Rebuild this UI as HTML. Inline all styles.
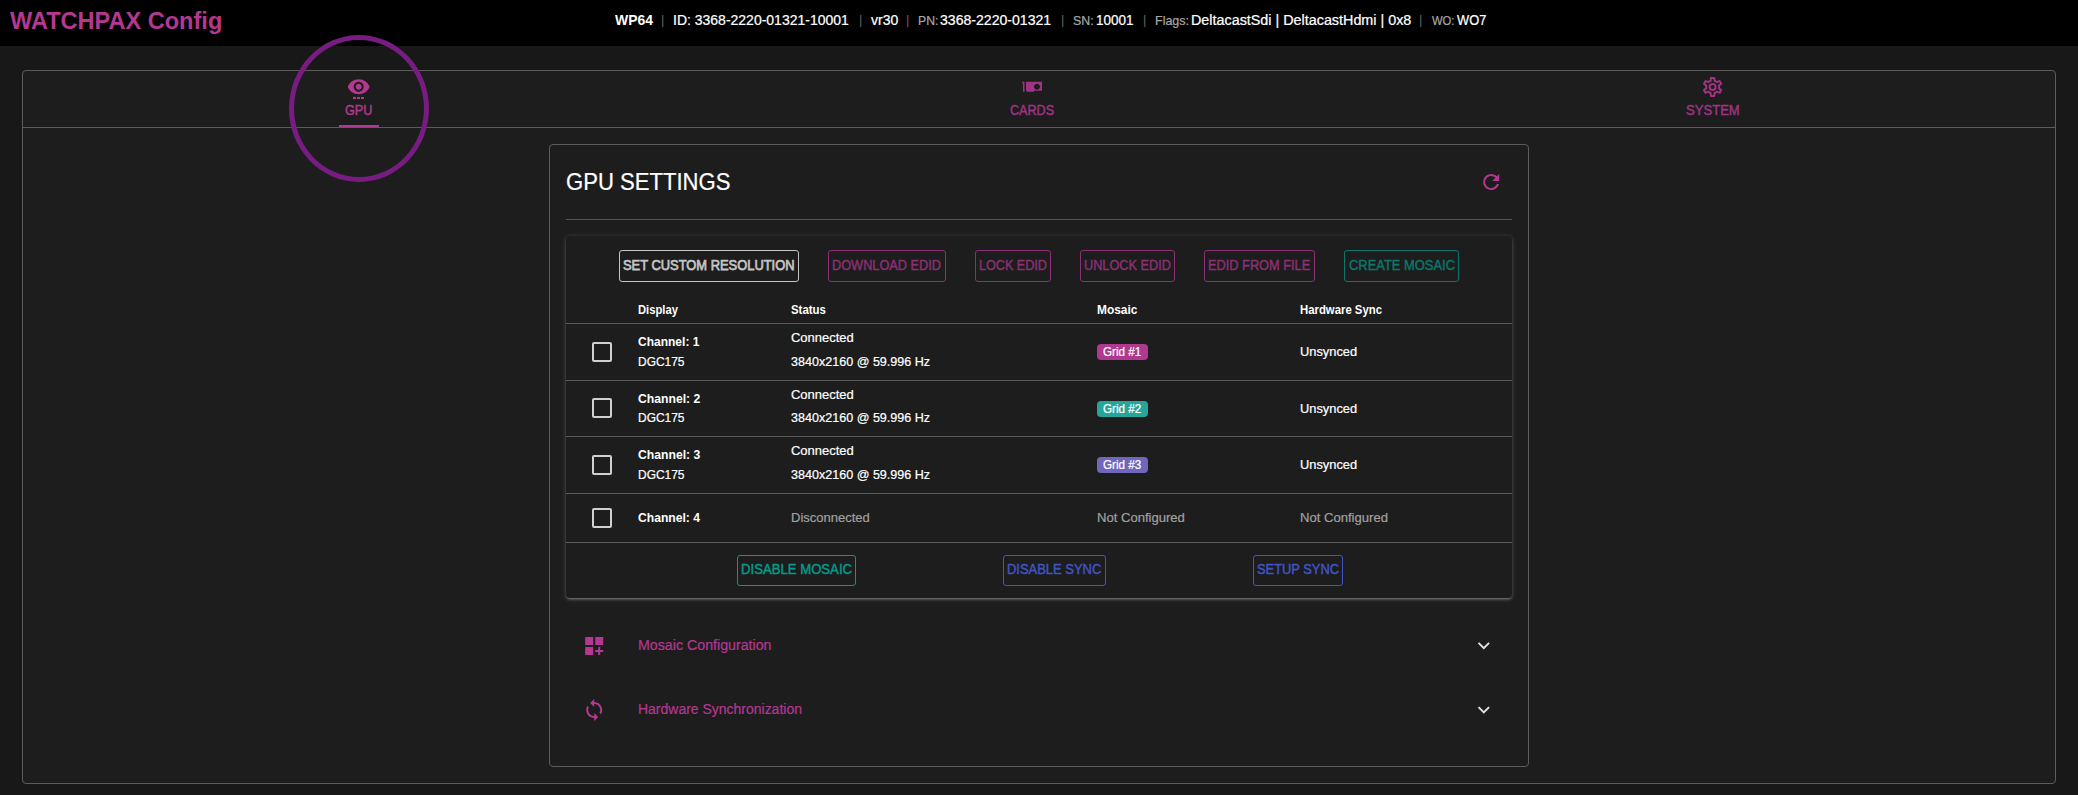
<!DOCTYPE html>
<html lang="en">
<head>
<meta charset="utf-8">
<title>WATCHPAX Config</title>
<style>
*{box-sizing:border-box;margin:0;padding:0}
html,body{width:2078px;height:795px;overflow:hidden;background:#181818}
body{position:relative;font-family:"Liberation Sans",sans-serif;color:#fff;font-size:13px}
.x{position:absolute;white-space:nowrap;transform-origin:0 50%}
.a{position:absolute}
#hdr{left:0;top:0;width:2078px;height:46px;background:#000}
#main{left:22px;top:70px;width:2034px;height:714px;border:1px solid #5c5c5c;border-radius:4px;background:#1d1d1d}
#tabline{left:23px;top:127px;width:2032px;height:1px;background:#5c5c5c}
#ind{left:339px;top:125px;width:40px;height:2px;background:#b43891}
#card{left:549px;top:144px;width:980px;height:623px;border:1px solid #5c5c5c;border-radius:4px;background:#1d1d1d}
#hr1{left:566px;top:219px;width:946px;height:1px;background:#555}
#inner{left:566px;top:236px;width:946px;height:362px;border-radius:4px;background:#1d1d1d;box-shadow:0 1px 5px rgba(255,255,255,.2),0 2px 2px rgba(255,255,255,.14),0 3px 1px -2px rgba(255,255,255,.12)}
.btn{position:absolute;top:250px;height:32px;border:1px solid;border-radius:3px}
.b2{top:555px;height:31px}
.ln{position:absolute;left:566px;width:946px;height:1px;background:#5a5a5a}
.cb{position:absolute;left:592px;width:20px;height:20px;border:2px solid #d0d0d0;border-radius:2px}
.badge{position:absolute;left:1097px;width:51px;height:16px;border-radius:4px}
#ring{left:289px;top:35px;width:140px;height:147px;border:5px solid #771c80;border-radius:50%}
#ico{left:0;top:0;width:2078px;height:795px}
</style>
</head>
<body>
<div id="hdr" class="a"></div>
<div id="main" class="a"></div>
<div id="tabline" class="a"></div>
<div id="ind" class="a"></div>
<div id="card" class="a"></div>
<div id="hr1" class="a"></div>
<div id="inner" class="a"></div>

<div class="btn" style="left:619px;width:180px;border-color:#c4c4c4"></div>
<div class="btn" style="left:828px;width:118px;border-color:#8b3074"></div>
<div class="btn" style="left:975px;width:76px;border-color:#8b3074"></div>
<div class="btn" style="left:1080px;width:95px;border-color:#8b3074"></div>
<div class="btn" style="left:1204px;width:111px;border-color:#8b3074"></div>
<div class="btn" style="left:1344px;width:115px;border-color:#0c766b"></div>

<div class="ln" style="top:323px"></div>
<div class="ln" style="top:380px"></div>
<div class="ln" style="top:436px"></div>
<div class="ln" style="top:493px"></div>
<div class="ln" style="top:542px"></div>

<div class="cb" style="top:342px"></div>
<div class="cb" style="top:398px"></div>
<div class="cb" style="top:455px"></div>
<div class="cb" style="top:508px"></div>

<div class="badge" style="top:344px;background:#b0388f"></div>
<div class="badge" style="top:401px;background:#26a69a"></div>
<div class="badge" style="top:457px;background:#6f67bb"></div>

<div class="btn b2" style="left:737px;width:119px;border-color:#069a8b"></div>
<div class="btn b2" style="left:1003px;width:103px;border-color:#4055c5"></div>
<div class="btn b2" style="left:1253px;width:90px;border-color:#4055c5"></div>

<svg id="ico" class="a" viewBox="0 0 2078 795">
<g transform="translate(346.7,74.85)" fill="#b43891">
<path d="M12 4.5C7 4.5 2.73 7.61 1 12c1.730 4.390 6 7.500 11 7.500s9.270-3.110 11-7.500C21.270 7.610 17 4.500 12 4.500zM12 17c-2.760 0-5-2.240-5-5s2.240-5 5-5 5 2.240 5 5-2.240 5-5 5zm0-8c-1.660 0-3 1.340-3 3s1.340 3 3 3 3-1.340 3-3-1.340-3-3-3z"/>
<rect x="6.3" y="22.1" width="3" height="2.1"/><rect x="10.3" y="22.1" width="3" height="2.1"/><rect x="14.3" y="22.1" width="3" height="2.1"/>
</g>
<g transform="translate(1020,74.7)" fill="#9f3481">
<path d="M2 7H4.500V17H3V8.500H2M22 7V16H14V17H7V16H6V7H22M17 9C15.340 9 14 10.340 14 12S15.340 15 17 15 20 13.660 20 12 18.660 9 17 9Z"/>
</g>
<g transform="translate(1700.6,74.9)" fill="#9f3481">
<path d="M12,8A4,4 0 0,1 16,12A4,4 0 0,1 12,16A4,4 0 0,1 8,12A4,4 0 0,1 12,8M12,10A2,2 0 0,0 10,12A2,2 0 0,0 12,14A2,2 0 0,0 14,12A2,2 0 0,0 12,10M10,22C9.750,22 9.540,21.820 9.500,21.580L9.130,18.930C8.500,18.680 7.960,18.340 7.440,17.940L4.950,18.950C4.730,19.030 4.460,18.950 4.340,18.730L2.340,15.270C2.210,15.050 2.270,14.780 2.460,14.630L4.570,12.970L4.500,12L4.570,11L2.460,9.370C2.270,9.220 2.210,8.950 2.340,8.730L4.340,5.270C4.460,5.050 4.730,4.960 4.950,5.050L7.440,6.050C7.960,5.660 8.500,5.320 9.130,5.070L9.500,2.420C9.540,2.180 9.750,2 10,2H14C14.250,2 14.460,2.180 14.500,2.420L14.870,5.070C15.500,5.320 16.040,5.660 16.560,6.050L19.050,5.050C19.270,4.960 19.540,5.050 19.660,5.270L21.660,8.730C21.790,8.950 21.730,9.220 21.540,9.370L19.430,11L19.500,12L19.430,13L21.540,14.630C21.730,14.780 21.790,15.050 21.660,15.270L19.660,18.730C19.540,18.950 19.270,19.040 19.050,18.950L16.560,17.950C16.040,18.340 15.500,18.680 14.870,18.930L14.500,21.580C14.460,21.820 14.250,22 14,22H10M11.250,4L10.880,6.610C9.680,6.860 8.620,7.500 7.850,8.390L5.440,7.350L4.690,8.650L6.800,10.200C6.400,11.370 6.400,12.640 6.800,13.800L4.680,15.360L5.430,16.660L7.860,15.620C8.630,16.500 9.680,17.140 10.870,17.380L11.240,20H12.760L13.130,17.390C14.320,17.140 15.370,16.500 16.140,15.620L18.570,16.660L19.320,15.360L17.200,13.810C17.600,12.640 17.600,11.370 17.200,10.200L19.310,8.650L18.560,7.350L16.150,8.390C15.380,7.500 14.320,6.860 13.120,6.620L12.750,4H11.250Z"/>
</g>
<g transform="translate(1479.2,169.9)" fill="#b43891">
<path d="M17.650 6.350C16.200 4.900 14.210 4 12 4c-4.420 0-7.990 3.580-7.990 8s3.570 8 7.990 8c3.730 0 6.840-2.550 7.730-6h-2.080c-.82 2.330-3.040 4-5.650 4-3.310 0-6-2.690-6-6s2.690-6 6-6c1.660 0 3.140.69 4.220 1.780L13 11h7V4l-2.350 2.350z"/>
</g>
<g transform="translate(582.2,634)" fill="#b43891">
<path d="M3 3h8v8H3zm10 0h8v8h-8zM3 13h8v8H3zm15 0h-2v3h-3v2h3v3h2v-3h3v-2h-3z"/>
</g>
<g transform="translate(582.2,698)" fill="#b43891">
<path d="M12 4V1L8 5l4 4V6c3.310 0 6 2.690 6 6 0 1.010-.25 1.970-.7 2.800l1.460 1.460C19.540 15.030 20 13.570 20 12c0-4.420-3.580-8-8-8zm0 14c-3.310 0-6-2.690-6-6 0-1.010.25-1.970.7-2.800L5.240 7.740C4.460 8.970 4 10.430 4 12c0 4.420 3.580 8 8 8v3l4-4-4-4v3z"/>
</g>
<g transform="translate(1471.8,633.6)" fill="#e0e0e0">
<path d="M7.410 8.590L12 13.170l4.590-4.580L18 10l-6 6-6-6 1.410-1.410z"/>
</g>
<g transform="translate(1471.8,697.8)" fill="#e0e0e0">
<path d="M7.410 8.590L12 13.170l4.590-4.580L18 10l-6 6-6-6 1.410-1.410z"/>
</g>
</svg>

<div class="x" style="left:10px;top:6px;font-size:23.30px;line-height:30px;font-weight:700;color:#b43891;transform:scaleX(1.0104);">WATCHPAX Config</div>
<div class="x" style="left:615px;top:10px;font-size:14.46px;line-height:20px;font-weight:700;color:#fff;transform:scaleX(0.9646);">WP64</div>
<div class="x" style="left:661px;top:10px;font-size:12.90px;line-height:19px;font-weight:400;color:#626262;transform:scaleX(1.0000);">|</div>
<div class="x" style="left:859px;top:10px;font-size:12.90px;line-height:19px;font-weight:400;color:#626262;transform:scaleX(1.0000);">|</div>
<div class="x" style="left:906px;top:10px;font-size:12.90px;line-height:19px;font-weight:400;color:#626262;transform:scaleX(1.0000);">|</div>
<div class="x" style="left:1061px;top:10px;font-size:12.90px;line-height:19px;font-weight:400;color:#626262;transform:scaleX(1.0000);">|</div>
<div class="x" style="left:1143px;top:10px;font-size:12.90px;line-height:19px;font-weight:400;color:#626262;transform:scaleX(1.0000);">|</div>
<div class="x" style="left:1419px;top:10px;font-size:12.90px;line-height:19px;font-weight:400;color:#626262;transform:scaleX(1.0000);">|</div>
<div class="x" style="left:673px;top:10px;font-size:14.46px;line-height:20px;font-weight:400;color:#fff;transform:scaleX(0.9681);-webkit-text-stroke:0.22px #fff;">ID: 3368-2220-01321-10001</div>
<div class="x" style="left:871px;top:10px;font-size:14.46px;line-height:20px;font-weight:400;color:#fff;transform:scaleX(0.9676);-webkit-text-stroke:0.22px #fff;">vr30</div>
<div class="x" style="left:918px;top:11px;font-size:13.43px;line-height:19px;font-weight:400;color:#a8a8a8;transform:scaleX(0.9099);-webkit-text-stroke:0.22px #a8a8a8;">PN:</div>
<div class="x" style="left:940px;top:10px;font-size:14.46px;line-height:20px;font-weight:400;color:#fff;transform:scaleX(0.9738);-webkit-text-stroke:0.22px #fff;">3368-2220-01321</div>
<div class="x" style="left:1073px;top:11px;font-size:13.43px;line-height:19px;font-weight:400;color:#a8a8a8;transform:scaleX(0.9210);-webkit-text-stroke:0.22px #a8a8a8;">SN:</div>
<div class="x" style="left:1096px;top:10px;font-size:14.46px;line-height:20px;font-weight:400;color:#fff;transform:scaleX(0.9344);-webkit-text-stroke:0.22px #fff;">10001</div>
<div class="x" style="left:1155px;top:11px;font-size:13.43px;line-height:19px;font-weight:400;color:#a8a8a8;transform:scaleX(0.9309);-webkit-text-stroke:0.22px #a8a8a8;">Flags:</div>
<div class="x" style="left:1191px;top:10px;font-size:14.46px;line-height:20px;font-weight:400;color:#fff;transform:scaleX(0.9925);-webkit-text-stroke:0.22px #fff;">DeltacastSdi | DeltacastHdmi | 0x8</div>
<div class="x" style="left:1432px;top:11px;font-size:13.43px;line-height:19px;font-weight:400;color:#a8a8a8;transform:scaleX(0.8382);-webkit-text-stroke:0.22px #a8a8a8;">WO:</div>
<div class="x" style="left:1457px;top:10px;font-size:14.46px;line-height:20px;font-weight:400;color:#fff;transform:scaleX(0.8908);-webkit-text-stroke:0.22px #fff;">WO7</div>
<div class="x" style="left:345px;top:100px;font-size:14.46px;line-height:20px;font-weight:400;color:#b43891;transform:scaleX(0.8712);-webkit-text-stroke:0.45px #b43891;">GPU</div>
<div class="x" style="left:1010px;top:100px;font-size:14.46px;line-height:20px;font-weight:400;color:#9f3481;transform:scaleX(0.8706);-webkit-text-stroke:0.45px #9f3481;">CARDS</div>
<div class="x" style="left:1686px;top:100px;font-size:14.46px;line-height:20px;font-weight:400;color:#9f3481;transform:scaleX(0.9043);-webkit-text-stroke:0.45px #9f3481;">SYSTEM</div>
<div class="x" style="left:566px;top:166px;font-size:24.79px;line-height:31px;font-weight:400;color:#fff;transform:scaleX(0.8913);-webkit-text-stroke:0.22px #fff;">GPU SETTINGS</div>
<div class="x" style="left:623px;top:255px;font-size:14.46px;line-height:20px;font-weight:400;color:#c4c4c4;transform:scaleX(0.8924);-webkit-text-stroke:0.75px #c4c4c4;">SET CUSTOM RESOLUTION</div>
<div class="x" style="left:832px;top:255px;font-size:14.46px;line-height:20px;font-weight:400;color:#8b3074;transform:scaleX(0.8815);-webkit-text-stroke:0.45px #8b3074;">DOWNLOAD EDID</div>
<div class="x" style="left:979px;top:255px;font-size:14.46px;line-height:20px;font-weight:400;color:#8b3074;transform:scaleX(0.8718);-webkit-text-stroke:0.45px #8b3074;">LOCK EDID</div>
<div class="x" style="left:1084px;top:255px;font-size:14.46px;line-height:20px;font-weight:400;color:#8b3074;transform:scaleX(0.8791);-webkit-text-stroke:0.45px #8b3074;">UNLOCK EDID</div>
<div class="x" style="left:1208px;top:255px;font-size:14.46px;line-height:20px;font-weight:400;color:#8b3074;transform:scaleX(0.8843);-webkit-text-stroke:0.45px #8b3074;">EDID FROM FILE</div>
<div class="x" style="left:1349px;top:255px;font-size:14.46px;line-height:20px;font-weight:400;color:#0c766b;transform:scaleX(0.8942);-webkit-text-stroke:0.45px #0c766b;">CREATE MOSAIC</div>
<div class="x" style="left:638px;top:301px;font-size:12.40px;line-height:18px;font-weight:700;color:#fff;transform:scaleX(0.9067);">Display</div>
<div class="x" style="left:791px;top:301px;font-size:12.40px;line-height:18px;font-weight:700;color:#fff;transform:scaleX(0.9226);">Status</div>
<div class="x" style="left:1097px;top:301px;font-size:12.40px;line-height:18px;font-weight:700;color:#fff;transform:scaleX(0.9623);">Mosaic</div>
<div class="x" style="left:1300px;top:301px;font-size:12.40px;line-height:18px;font-weight:700;color:#fff;transform:scaleX(0.9152);">Hardware Sync</div>
<div class="x" style="left:638px;top:332px;font-size:13.43px;line-height:19px;font-weight:700;color:#fff;transform:scaleX(0.8948);">Channel: 1</div>
<div class="x" style="left:638px;top:352px;font-size:13.43px;line-height:19px;font-weight:400;color:#fff;transform:scaleX(0.8900);-webkit-text-stroke:0.22px #fff;">DGC175</div>
<div class="x" style="left:791px;top:328px;font-size:13.43px;line-height:19px;font-weight:400;color:#fff;transform:scaleX(0.9668);-webkit-text-stroke:0.22px #fff;">Connected</div>
<div class="x" style="left:791px;top:352px;font-size:13.43px;line-height:19px;font-weight:400;color:#fff;transform:scaleX(0.9357);-webkit-text-stroke:0.22px #fff;">3840x2160 @ 59.996 Hz</div>
<div class="x" style="left:1300px;top:342px;font-size:13.43px;line-height:19px;font-weight:400;color:#fff;transform:scaleX(0.9571);-webkit-text-stroke:0.22px #fff;">Unsynced</div>
<div class="x" style="left:638px;top:389px;font-size:13.43px;line-height:19px;font-weight:700;color:#fff;transform:scaleX(0.9086);">Channel: 2</div>
<div class="x" style="left:638px;top:408px;font-size:13.43px;line-height:19px;font-weight:400;color:#fff;transform:scaleX(0.8900);-webkit-text-stroke:0.22px #fff;">DGC175</div>
<div class="x" style="left:791px;top:385px;font-size:13.43px;line-height:19px;font-weight:400;color:#fff;transform:scaleX(0.9668);-webkit-text-stroke:0.22px #fff;">Connected</div>
<div class="x" style="left:791px;top:408px;font-size:13.43px;line-height:19px;font-weight:400;color:#fff;transform:scaleX(0.9357);-webkit-text-stroke:0.22px #fff;">3840x2160 @ 59.996 Hz</div>
<div class="x" style="left:1300px;top:399px;font-size:13.43px;line-height:19px;font-weight:400;color:#fff;transform:scaleX(0.9571);-webkit-text-stroke:0.22px #fff;">Unsynced</div>
<div class="x" style="left:638px;top:445px;font-size:13.43px;line-height:19px;font-weight:700;color:#fff;transform:scaleX(0.9082);">Channel: 3</div>
<div class="x" style="left:638px;top:465px;font-size:13.43px;line-height:19px;font-weight:400;color:#fff;transform:scaleX(0.8900);-webkit-text-stroke:0.22px #fff;">DGC175</div>
<div class="x" style="left:791px;top:441px;font-size:13.43px;line-height:19px;font-weight:400;color:#fff;transform:scaleX(0.9668);-webkit-text-stroke:0.22px #fff;">Connected</div>
<div class="x" style="left:791px;top:465px;font-size:13.43px;line-height:19px;font-weight:400;color:#fff;transform:scaleX(0.9357);-webkit-text-stroke:0.22px #fff;">3840x2160 @ 59.996 Hz</div>
<div class="x" style="left:1300px;top:455px;font-size:13.43px;line-height:19px;font-weight:400;color:#fff;transform:scaleX(0.9571);-webkit-text-stroke:0.22px #fff;">Unsynced</div>
<div class="x" style="left:1103px;top:343px;font-size:12.40px;line-height:18px;font-weight:400;color:#fff;transform:scaleX(0.9430);-webkit-text-stroke:0.22px #fff;">Grid #1</div>
<div class="x" style="left:1103px;top:400px;font-size:12.40px;line-height:18px;font-weight:400;color:#fff;transform:scaleX(0.9437);-webkit-text-stroke:0.22px #fff;">Grid #2</div>
<div class="x" style="left:1103px;top:456px;font-size:12.40px;line-height:18px;font-weight:400;color:#fff;transform:scaleX(0.9417);-webkit-text-stroke:0.22px #fff;">Grid #3</div>
<div class="x" style="left:638px;top:508px;font-size:13.43px;line-height:19px;font-weight:700;color:#fff;transform:scaleX(0.9036);">Channel: 4</div>
<div class="x" style="left:791px;top:508px;font-size:13.43px;line-height:19px;font-weight:400;color:#a0a0a0;transform:scaleX(0.9683);-webkit-text-stroke:0.22px #a0a0a0;">Disconnected</div>
<div class="x" style="left:1097px;top:508px;font-size:13.43px;line-height:19px;font-weight:400;color:#a0a0a0;transform:scaleX(0.9734);-webkit-text-stroke:0.22px #a0a0a0;">Not Configured</div>
<div class="x" style="left:1300px;top:508px;font-size:13.43px;line-height:19px;font-weight:400;color:#a0a0a0;transform:scaleX(0.9745);-webkit-text-stroke:0.22px #a0a0a0;">Not Configured</div>
<div class="x" style="left:741px;top:559px;font-size:14.46px;line-height:20px;font-weight:400;color:#069a8b;transform:scaleX(0.9095);-webkit-text-stroke:0.45px #069a8b;">DISABLE MOSAIC</div>
<div class="x" style="left:1007px;top:559px;font-size:14.46px;line-height:20px;font-weight:400;color:#4055c5;transform:scaleX(0.8962);-webkit-text-stroke:0.45px #4055c5;">DISABLE SYNC</div>
<div class="x" style="left:1257px;top:559px;font-size:14.46px;line-height:20px;font-weight:400;color:#4055c5;transform:scaleX(0.8906);-webkit-text-stroke:0.45px #4055c5;">SETUP SYNC</div>
<div class="x" style="left:638px;top:635px;font-size:14.46px;line-height:20px;font-weight:400;color:#b43891;transform:scaleX(0.9833);-webkit-text-stroke:0.22px #b43891;">Mosaic Configuration</div>
<div class="x" style="left:638px;top:699px;font-size:14.46px;line-height:20px;font-weight:400;color:#b43891;transform:scaleX(0.9671);-webkit-text-stroke:0.22px #b43891;">Hardware Synchronization</div>
<div id="ring" class="a"></div>
</body>
</html>
